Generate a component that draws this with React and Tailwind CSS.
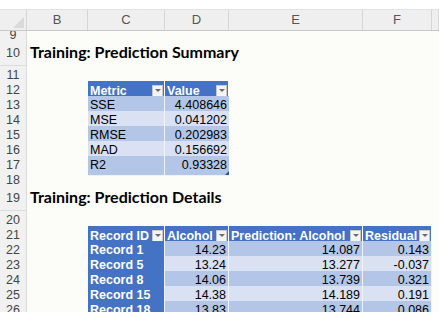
const COLS = 'grid grid-cols-[27px_61px_77px_64px_134px_69px_1fr]';

const summary = [
    ['SSE', '4.408646'],
    ['MSE', '0.041202'],
    ['RMSE', '0.202983'],
    ['MAD', '0.156692'],
    ['R2', '0.93328'],
];

const details = [
    ['Record 1', '14.23', '14.087', '0.143'],
    ['Record 5', '13.24', '13.277', '-0.037'],
    ['Record 8', '14.06', '13.739', '0.321'],
    ['Record 15', '14.38', '14.189', '0.191'],
    ['Record 18', '13.83', '13.744', '0.086'],
];

const Drop = () => (
    <span className="ml-auto mr-[1px] flex h-[12px] w-[11px] shrink-0 items-center justify-center border border-[#c9c9c9] bg-[#f4f4f4]">
        <span className="h-0 w-0 border-x-[3px] border-t-[3px] border-x-transparent border-t-[#6b6b6b]" />
    </span>
);

const Row = ({ n, h = 'h-[15px]', children }) => (
    <div className={`${COLS} ${h}`}>
        <div className="flex items-center justify-center border-b border-r border-[#dcdcdc] bg-[#f1f1f1] text-[12.5px] text-[#444]">
            {n}
        </div>
        {children}
    </div>
);

const HeadCell = ({ label }) => (
    <div className="flex items-center border-r border-white bg-[#4472c4] pl-[2px] text-[12.5px] font-bold text-white">
        <span className="overflow-hidden whitespace-nowrap">{label}</span>
        <Drop />
    </div>
);

const App = () => {
    const band = (i) => (i % 2 === 0 ? 'bg-[#b4c6e7]' : 'bg-[#d9e1f2]');

    return (
        <div className="h-[312px] w-[439px] overflow-hidden bg-white font-['Liberation_Sans',Arial,sans-serif] text-black">
            <div className="h-[10px] border-b border-[#e2e2e2] bg-white" />
            <div className={`${COLS} h-[21px] border-b border-[#c8c8c8] bg-[#efefef] text-[13px] text-[#555]`}>
                <div className="relative border-r border-[#d6d6d6]">
                    <span className="absolute bottom-[2px] right-[2px] h-0 w-0 border-b-[11px] border-l-[11px] border-b-[#dadada] border-l-transparent" />
                </div>
                {['B', 'C', 'D', 'E', 'F', ''].map((c, i) => (
                    <div key={i} className="flex items-center justify-center border-r border-[#d6d6d6]">
                        {c}
                    </div>
                ))}
            </div>

            <div className="h-[281px] overflow-hidden bg-[#fcfcf9]">
                <div className="-mt-[5px]">
                    <Row n={9} />
                    <Row n={10} h="h-[25px]">
                        <div className="col-span-5 flex items-end whitespace-nowrap pb-[5px] pl-[3px] font-['Lato',sans-serif] text-[16px] font-bold leading-[18px]">
                            Training: Prediction Summary
                        </div>
                    </Row>
                    <Row n={11} />
                    <Row n={12}>
                        <div />
                        <HeadCell label="Metric" />
                        <HeadCell label="Value" />
                    </Row>
                    {summary.map(([m, v], i) => (
                        <Row key={m} n={13 + i}>
                            <div />
                            <div className={`flex items-center border-b border-r border-[#eef2fa] pl-[2px] text-[12.5px] ${band(i)}`}>
                                {m}
                            </div>
                            <div className={`relative flex items-center justify-end border-b border-[#eef2fa] pr-[2px] text-[12.5px] ${band(i)}`}>
                                {v}
                                {i === summary.length - 1 && (
                                    <span className="absolute bottom-0 right-0 h-0 w-0 border-b-[4px] border-l-[4px] border-b-[#2f4f9a] border-l-transparent" />
                                )}
                            </div>
                        </Row>
                    ))}
                    <Row n={18} />
                    <Row n={19} h="h-[25px]">
                        <div className="col-span-5 flex items-end whitespace-nowrap pb-[5px] pl-[3px] font-['Lato',sans-serif] text-[16px] font-bold leading-[18px]">
                            Training: Prediction Details
                        </div>
                    </Row>
                    <Row n={20} />
                    <Row n={21}>
                        <div />
                        <HeadCell label="Record ID" />
                        <HeadCell label="Alcohol" />
                        <HeadCell label="Prediction: Alcohol" />
                        <HeadCell label="Residual" />
                    </Row>
                    {details.map(([id, a, p, r], i) => (
                        <Row key={id} n={22 + i}>
                            <div />
                            <div className="flex items-center border-b border-r border-[#eef2fa] bg-[#4472c4] pl-[2px] text-[12.5px] font-bold text-white">
                                {id}
                            </div>
                            {[a, p, r].map((v, j) => (
                                <div key={j} className={`flex items-center justify-end border-b border-r border-[#eef2fa] pr-[2px] text-[12.5px] ${band(i)}`}>
                                    {v}
                                </div>
                            ))}
                        </Row>
                    ))}
                </div>
            </div>
        </div>
    );
};

export default App;
